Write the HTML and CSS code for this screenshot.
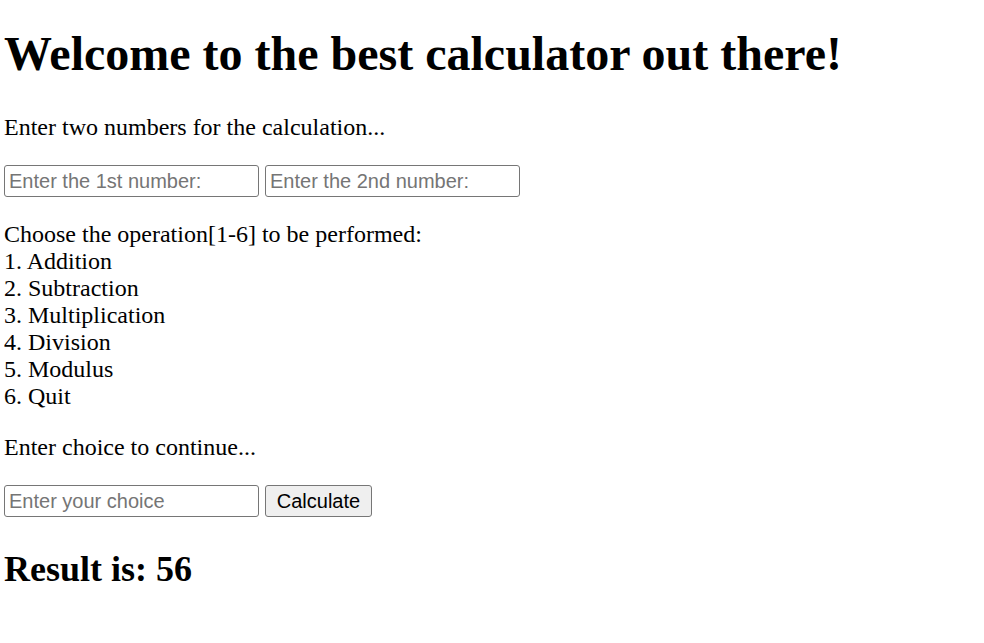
FILE: index.html
```html
<!DOCTYPE html>
<html>
<head>
<meta charset="utf-8">
<title>Calculator</title>
<link rel="stylesheet" href="styles.css">
</head>
<body>
<h1 class="title">Welcome to the best calculator out there!</h1>
<p class="text">Enter two numbers for the calculation...</p>
<div class="row">
  <input class="field" type="text" placeholder="Enter the 1st number:">
  <input class="field" type="text" placeholder="Enter the 2nd number:">
</div>
<p class="text">Choose the operation[1-6] to be performed:<br>1. Addition<br>2. Subtraction<br>3. Multiplication<br>4. Division<br>5. Modulus<br>6. Quit</p>
<p class="text">Enter choice to continue...</p>
<div class="row">
  <input class="field" type="text" placeholder="Enter your choice">
  <button class="btn" type="button">Calculate</button>
</div>
<h2 class="result">Result is: 56</h2>
</body>
</html>
```

FILE: styles.css
```css
html { background: #fff; }
body {
  margin: 0 4px;
  padding-top: 0;
  font-family: "Liberation Serif", "Times New Roman", serif;
  font-size: 24px;
  line-height: 27px;
  color: #000;
}
.title {
  font-size: 48px;
  line-height: 55px;
  font-weight: bold;
  margin: 26px 0 33px;
}
.text {
  margin: 24px 0;
}
.row {
  display: flex;
  gap: 6px;
  margin: 24px 0;
  align-items: stretch;
}
.field {
  box-sizing: border-box;
  width: 255px;
  height: 32px;
  margin: 0;
  padding: 1px 4px;
  border: 1px solid #767676;
  border-radius: 3px;
  font-family: "Liberation Sans", Arial, sans-serif;
  font-size: 20px;
  color: #000;
  background: #fff;
  outline: none;
}
.field::placeholder {
  color: #757575;
}
.btn {
  box-sizing: border-box;
  height: 32px;
  width: 107px;
  margin: 0;
  padding: 1px 9px;
  border: 1px solid #767676;
  border-radius: 3px;
  background: #efefef;
  color: #000;
  font-family: "Liberation Sans", Arial, sans-serif;
  font-size: 20px;
}
.result {
  font-size: 36px;
  line-height: 40px;
  font-weight: bold;
  margin: 32px 0 30px;
}
```
